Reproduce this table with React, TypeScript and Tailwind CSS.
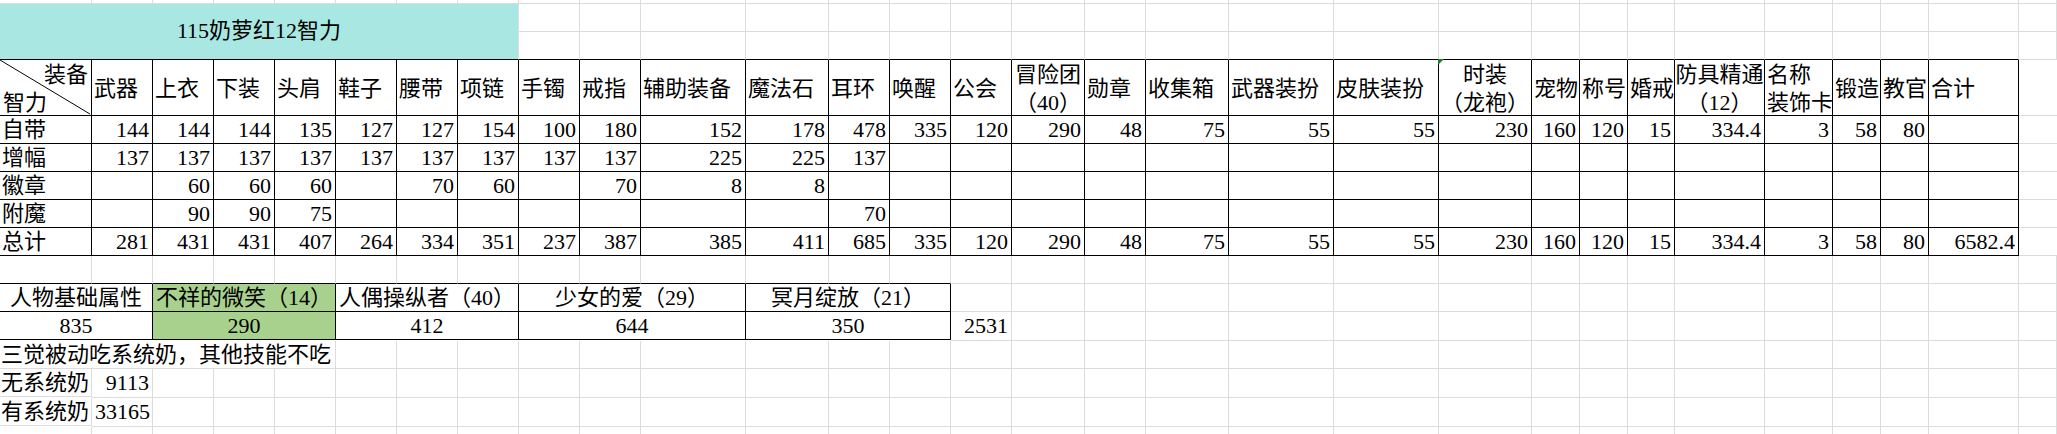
import React from "react"

// sheet columns: row label + 28 items, then a filler column to the page edge
const GRID =
  "grid grid-cols-[92px_61px_61px_61px_61px_61px_61px_61px_61px_61px_105px_83px_61px_61px_61px_73px_61px_83px_105px_105px_93px_48px_48px_47px_90px_68px_48px_48px_90px_1fr]"

const GRAY = "border-r border-b border-[#dcdcdc]"
const BLACK = "border-r border-b border-black"

type V = string | number

const pad = (a: V[]) => [...a, ...Array(28 - a.length).fill("")]

const headers: { t: string; c?: boolean; tri?: boolean }[] = [
  { t: "武器" },
  { t: "上衣" },
  { t: "下装" },
  { t: "头肩" },
  { t: "鞋子" },
  { t: "腰带" },
  { t: "项链" },
  { t: "手镯" },
  { t: "戒指" },
  { t: "辅助装备" },
  { t: "魔法石" },
  { t: "耳环" },
  { t: "唤醒" },
  { t: "公会" },
  { t: "冒险团\n（40）", c: true },
  { t: "勋章" },
  { t: "收集箱" },
  { t: "武器装扮" },
  { t: "皮肤装扮" },
  { t: "时装\n（龙袍）", c: true, tri: true },
  { t: "宠物" },
  { t: "称号" },
  { t: "婚戒" },
  { t: "防具精通\n（12）", c: true },
  { t: "名称\n装饰卡" },
  { t: "锻造" },
  { t: "教官" },
  { t: "合计" },
]

const rows: [string, V[]][] = [
  ["自带", pad([144, 144, 144, 135, 127, 127, 154, 100, 180, 152, 178, 478, 335, 120, 290, 48, 75, 55, 55, 230, 160, 120, 15, "334.4", 3, 58, 80])],
  ["增幅", pad([137, 137, 137, 137, 137, 137, 137, 137, 137, 225, 225, 137])],
  ["徽章", pad(["", 60, 60, 60, "", 70, 60, "", 70, 8, 8])],
  ["附魔", pad(["", 90, 90, 75, "", "", "", "", "", "", "", 70])],
  ["总计", pad([281, 431, 431, 407, 264, 334, 351, 237, 387, 385, 411, 685, 335, 120, 290, 48, 75, 55, 55, 230, 160, 120, 15, "334.4", 3, 58, 80, "6582.4"])],
]

// bottom block: label, span
const skills: { t: string; v: number; span: string; green?: boolean }[] = [
  { t: "人物基础属性", v: 835, span: "col-span-2" },
  { t: "不祥的微笑（14）", v: 290, span: "col-span-3", green: true },
  { t: "人偶操纵者（40）", v: 412, span: "col-span-3" },
  { t: "少女的爱（29）", v: 644, span: "col-span-3" },
  { t: "冥月绽放（21）", v: 350, span: "col-span-3" },
]

const range = (n: number) => Array.from({ length: n }, (_, i) => i)

const App = () => {
  return (
    <div className="h-[434px] w-[2057px] overflow-hidden whitespace-nowrap bg-white text-[22px] leading-[28px] text-black font-['Liberation_Serif','Noto_Sans_CJK_SC',serif]">
      {/* sheet rows above the table */}
      <div className={`${GRID} grid-rows-[4px_28px_28px]`}>
        {range(30).map((i) => (
          <div key={"r0" + i} className={GRAY} />
        ))}
        <div className="col-span-8 row-span-2 flex items-center justify-center border-r border-b border-r-[#dcdcdc] border-b-black bg-[#a9e8e2] pb-[2px]">
          115奶萝红12智力
        </div>
        {range(22).map((i) => (
          <div key={"r1" + i} className={GRAY} />
        ))}
        {range(22).map((i) => (
          <div key={"r2" + i} className={i < 21 ? "border-r border-b border-r-[#dcdcdc] border-b-black" : GRAY} />
        ))}
      </div>

      {/* main table */}
      <div className={GRID}>
        {/* header */}
        <div className={`${BLACK} relative h-[56px]`}>
          <svg className="absolute inset-0 h-full w-full" preserveAspectRatio="none" viewBox="0 0 92 56">
            <line x1="0" y1="0" x2="91" y2="55" stroke="black" strokeWidth="1" />
          </svg>
          <div className="flex h-full flex-col justify-between pt-[1px]">
            <span className="self-end pr-[3px]">装备</span>
            <span className="self-start pl-[3px]">智力</span>
          </div>
        </div>
        {headers.map((h) => (
          <div
            key={h.t}
            className={`${BLACK} relative flex h-[56px] flex-col justify-center overflow-visible pt-[2px] ${h.c ? "items-center" : "items-start pl-[2px]"}`}
          >
            {h.tri && <span className="absolute -top-px -left-px h-0 w-0 border-t-[6px] border-r-[6px] border-t-[#1e7d32] border-r-transparent" />}
            {h.t.split("\n").map((line) => (
              <span key={line}>{line}</span>
            ))}
          </div>
        ))}
        <div className="border-b border-[#dcdcdc]" />

        {/* data rows */}
        {rows.map(([label, vals]) => (
          <React.Fragment key={label}>
            <div className={`${BLACK} h-[28px] px-[2px]`}>{label}</div>
            {vals.map((v, i) => (
              <div key={i} className={`${BLACK} h-[28px] px-[3px] text-right`}>
                {v}
              </div>
            ))}
            <div className="border-b border-[#dcdcdc]" />
          </React.Fragment>
        ))}
      </div>

      {/* skills block below */}
      <div className={GRID}>
        {range(30).map((i) => (
          <div key={"e" + i} className={`h-[28px] border-r border-b ${i < 14 ? "border-r-[#dcdcdc] border-b-black" : "border-[#dcdcdc]"}`} />
        ))}

        {skills.map((s) => (
          <div key={s.t} className={`${BLACK} ${s.span} h-[28px] text-center ${s.green ? "bg-[#a9d18e]" : ""}`}>
            {s.t}
          </div>
        ))}
        {range(16).map((i) => (
          <div key={"h" + i} className={GRAY} />
        ))}

        {skills.map((s) => (
          <div key={s.t + "v"} className={`${BLACK} ${s.span} h-[28px] text-center ${s.green ? "bg-[#a9d18e]" : ""}`}>
            {s.v}
          </div>
        ))}
        <div className={`${GRAY} px-[3px] text-right`}>2531</div>
        {range(15).map((i) => (
          <div key={"v" + i} className={GRAY} />
        ))}

        <div className={`${GRAY} col-span-5 h-[28px] px-[1px]`}>三觉被动吃系统奶，其他技能不吃</div>
        {range(25).map((i) => (
          <div key={"n" + i} className={GRAY} />
        ))}

        <div className={`${GRAY} h-[28px] px-[1px]`}>无系统奶</div>
        <div className={`${GRAY} px-[3px] text-right`}>9113</div>
        {range(28).map((i) => (
          <div key={"w" + i} className={GRAY} />
        ))}

        <div className={`${GRAY} h-[28px] px-[1px]`}>有系统奶</div>
        <div className={`${GRAY} px-[3px] text-right`}>33165</div>
        {range(28).map((i) => (
          <div key={"y" + i} className={GRAY} />
        ))}

        {range(30).map((i) => (
          <div key={"z" + i} className={`${GRAY} h-[28px]`} />
        ))}
      </div>
    </div>
  )
}

export default App
